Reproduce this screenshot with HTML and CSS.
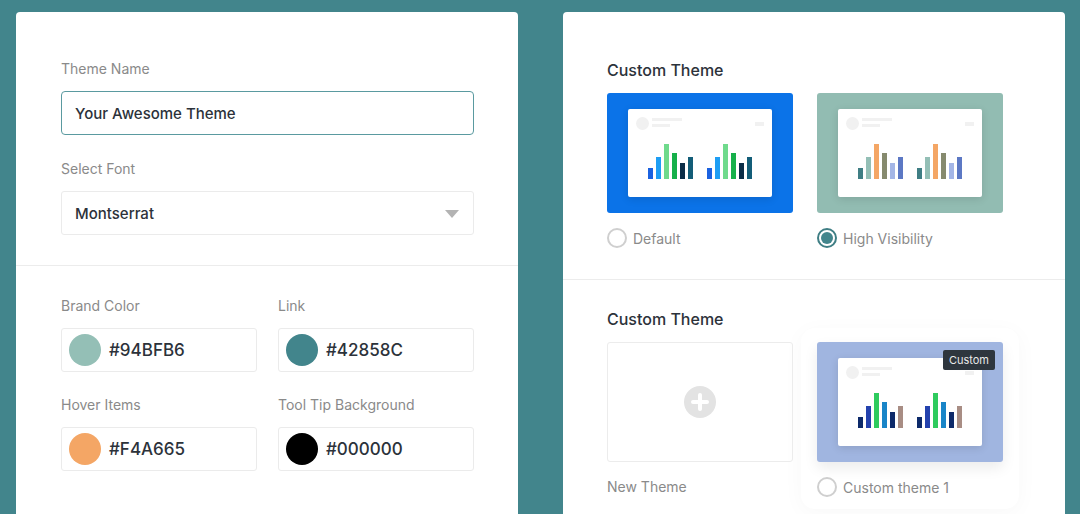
FILE: index.html
```html
<!DOCTYPE html>
<html lang="en">
<head>
<meta charset="utf-8">
<title>Theme Settings</title>
<link rel="stylesheet" href="styles.css">
</head>
<body>
<div class="page">
  <section class="card">
    <div class="section section-top">
      <label class="field-label">Theme Name</label>
      <div class="text-input">Your Awesome Theme</div>
      <label class="field-label spaced">Select Font</label>
      <div class="select">
        <span>Montserrat</span>
        <span class="caret"></span>
      </div>
    </div>
    <div class="section section-colors">
      <div class="color-grid">
        <div class="color-field">
          <label class="field-label">Brand Color</label>
          <div class="color-input"><span class="swatch swatch-brand"></span><span class="hex">#94BFB6</span></div>
        </div>
        <div class="color-field">
          <label class="field-label">Link</label>
          <div class="color-input"><span class="swatch swatch-link"></span><span class="hex">#42858C</span></div>
        </div>
        <div class="color-field">
          <label class="field-label">Hover Items</label>
          <div class="color-input"><span class="swatch swatch-hover"></span><span class="hex">#F4A665</span></div>
        </div>
        <div class="color-field">
          <label class="field-label">Tool Tip Background</label>
          <div class="color-input"><span class="swatch swatch-tip"></span><span class="hex">#000000</span></div>
        </div>
      </div>
    </div>
  </section>

  <section class="card">
    <div class="section section-themes">
      <h2 class="heading">Custom Theme</h2>
      <div class="theme-grid">
        <div class="theme-item">
          <div class="thumb thumb-default">
            <div class="mini">
              <div class="mini-head"><span class="mini-avatar"></span><span class="mini-lines"><span class="mini-line long"></span><span class="mini-line short"></span></span><span class="mini-tag"></span></div>
              <div class="mini-chart">
                <div class="bars"><i></i><i></i><i></i><i></i><i></i><i></i></div>
                <div class="bars"><i></i><i></i><i></i><i></i><i></i><i></i></div>
              </div>
            </div>
          </div>
          <div class="radio-row"><span class="radio"></span><span class="radio-text">Default</span></div>
        </div>
        <div class="theme-item">
          <div class="thumb thumb-high">
            <div class="mini">
              <div class="mini-head"><span class="mini-avatar"></span><span class="mini-lines"><span class="mini-line long"></span><span class="mini-line short"></span></span><span class="mini-tag"></span></div>
              <div class="mini-chart">
                <div class="bars"><i></i><i></i><i></i><i></i><i></i><i></i></div>
                <div class="bars"><i></i><i></i><i></i><i></i><i></i><i></i></div>
              </div>
            </div>
          </div>
          <div class="radio-row"><span class="radio checked"></span><span class="radio-text">High Visibility</span></div>
        </div>
      </div>
    </div>
    <div class="section section-custom">
      <h2 class="heading">Custom Theme</h2>
      <div class="theme-grid">
        <div class="theme-item">
          <div class="thumb thumb-new">
            <svg class="plus" width="32" height="32" viewBox="0 0 32 32" aria-hidden="true">
              <circle cx="16" cy="16" r="16" fill="#e3e3e3"/>
              <rect x="7" y="14" width="18" height="4" rx="2" fill="#fff"/>
              <rect x="14" y="7" width="4" height="18" rx="2" fill="#fff"/>
            </svg>
          </div>
          <div class="plain-label">New Theme</div>
        </div>
        <div class="theme-item hovered">
          <div class="thumb thumb-custom">
            <div class="mini">
              <div class="mini-head"><span class="mini-avatar"></span><span class="mini-lines"><span class="mini-line long"></span><span class="mini-line short"></span></span><span class="mini-tag"></span></div>
              <div class="mini-chart">
                <div class="bars"><i></i><i></i><i></i><i></i><i></i><i></i></div>
                <div class="bars"><i></i><i></i><i></i><i></i><i></i><i></i></div>
              </div>
            </div>
            <span class="tooltip">Custom</span>
          </div>
          <div class="radio-row"><span class="radio"></span><span class="radio-text">Custom theme 1</span></div>
        </div>
      </div>
    </div>
  </section>
</div>
</body>
</html>
```

FILE: styles.css
```css
* { box-sizing: border-box; }

html, body {
  margin: 0;
  padding: 0;
}

body {
  background: #42858c;
  font-family: Inter, "Open Sans", "DejaVu Sans", sans-serif;
  color: #2c323a;
  width: 1080px;
  height: 514px;
  overflow: hidden;
}

.page {
  display: grid;
  grid-template-columns: 502px 502px;
  column-gap: 45px;
  padding: 12px 0 0 16px;
  height: 514px;
}

.card {
  background: #fff;
  border-radius: 4px 4px 0 0;
  height: 520px;
  position: relative;
  z-index: 0;
}

.section {
  padding-left: 45px;
  padding-right: 44px;
}

.section-top {
  padding-top: 47px;
  padding-bottom: 30px;
  border-bottom: 1px solid #ececec;
}

.field-label {
  display: block;
  font-size: 14px;
  line-height: 20px;
  color: #8a8a8a;
  margin-bottom: 12px;
}

.field-label.spaced { margin-top: 24px; }

.text-input {
  height: 44px;
  border: 1px solid #5a9aa0;
  border-radius: 4px;
  padding: 0 13px;
  display: flex;
  align-items: center;
  font-size: 15px;
  font-weight: 500;
  color: #2c323a;
}

.select {
  height: 44px;
  border: 1px solid #ebebeb;
  border-radius: 3px;
  padding: 0 14px 0 13px;
  display: flex;
  align-items: center;
  justify-content: space-between;
  font-size: 15px;
  font-weight: 500;
  color: #2c323a;
}

.caret {
  width: 0;
  height: 0;
  border-left: 7px solid transparent;
  border-right: 7px solid transparent;
  border-top: 8px solid #b3b3b3;
  margin-top: 2px;
}

.section-colors {
  padding-top: 30px;
}

.color-grid {
  display: grid;
  grid-template-columns: 196px 196px;
  column-gap: 21px;
  row-gap: 23px;
}

.color-input {
  height: 44px;
  border: 1px solid #ebebeb;
  border-radius: 3px;
  padding: 0 7px;
  display: flex;
  align-items: center;
  gap: 8px;
}

.swatch {
  width: 32px;
  height: 32px;
  border-radius: 50%;
  flex: none;
}
.swatch-brand { background: #94bfb6; }
.swatch-link { background: #42858c; }
.swatch-hover { background: #f4a665; }
.swatch-tip { background: #000; }

.hex {
  font-size: 17px;
  font-weight: 500;
  color: #2c323a;
}

/* Right card */
.card + .card .section {
  padding-left: 44px;
}

.section-themes {
  padding-top: 47px;
  padding-bottom: 31px;
  border-bottom: 1px solid #ececec;
}

.section-custom {
  padding-top: 28px;
}

.heading {
  margin: 0 0 12px;
  font-size: 16px;
  line-height: 22px;
  font-weight: 500;
  color: #2c323a;
}

.theme-grid {
  display: grid;
  grid-template-columns: 186px 186px;
  column-gap: 24px;
}

.theme-item { position: relative; }

.theme-item.hovered::before {
  content: "";
  position: absolute;
  top: -14px;
  left: -16px;
  right: -16px;
  bottom: -12px;
  border-radius: 14px;
  background: #fff;
  box-shadow: 0 4px 22px rgba(0, 0, 0, 0.03);
  z-index: -1;
}

.thumb {
  height: 120px;
  border-radius: 3px;
  padding: 16px 21px;
  position: relative;
}

.thumb-default { background: #0b73e8; }
.thumb-high { background: #92bcb2; }
.thumb-custom {
  background: #a0b5e0;
  box-shadow: 0 6px 14px rgba(0, 0, 0, 0.08);
}
.thumb-new {
  border: 1px solid #ececec;
  display: flex;
  align-items: center;
  justify-content: center;
}

.mini {
  width: 144px;
  height: 88px;
  background: #fff;
  border-radius: 2px;
  box-shadow: 0 2px 8px rgba(0, 0, 0, 0.12);
  padding: 8px 8px 0;
}

.mini-head {
  display: flex;
  align-items: flex-start;
  height: 13px;
}

.mini-avatar {
  width: 13px;
  height: 13px;
  border-radius: 50%;
  background: #f1f1f1;
  flex: none;
}

.mini-lines {
  display: flex;
  flex-direction: column;
  gap: 3px;
  margin-left: 3px;
  margin-top: 1px;
}

.mini-line {
  display: block;
  height: 3px;
  background: #f1f1f1;
}
.mini-line.long { width: 30px; }
.mini-line.short { width: 18px; }

.mini-tag {
  margin-left: auto;
  margin-top: 5px;
  width: 9px;
  height: 4px;
  background: #f1f1f1;
}

.mini-chart {
  display: flex;
  justify-content: center;
  gap: 14px;
  margin-top: 14px;
  height: 35px;
}

.bars {
  display: flex;
  align-items: flex-end;
  gap: 3px;
}

.bars i {
  display: block;
  width: 5px;
}
.bars i:nth-child(1) { height: 11px; }
.bars i:nth-child(2) { height: 22px; }
.bars i:nth-child(3) { height: 35px; }
.bars i:nth-child(4) { height: 26px; }
.bars i:nth-child(5) { height: 16px; }
.bars i:nth-child(6) { height: 22px; }

.thumb-default .bars i:nth-child(1) { background: #1b62e0; }
.thumb-default .bars i:nth-child(2) { background: #1e9ef4; }
.thumb-default .bars i:nth-child(3) { background: #6fda8c; }
.thumb-default .bars i:nth-child(4) { background: #16b04a; }
.thumb-default .bars i:nth-child(5) { background: #0b2d47; }
.thumb-default .bars i:nth-child(6) { background: #135d78; }

.thumb-high .bars i:nth-child(1) { background: #3f7e84; }
.thumb-high .bars i:nth-child(2) { background: #94bfb6; }
.thumb-high .bars i:nth-child(3) { background: #f4a665; }
.thumb-high .bars i:nth-child(4) { background: #868a6e; }
.thumb-high .bars i:nth-child(5) { background: #a4b6e6; }
.thumb-high .bars i:nth-child(6) { background: #5c78c4; }

.thumb-custom .bars i:nth-child(1) { background: #0d2a6a; }
.thumb-custom .bars i:nth-child(2) { background: #2442ae; }
.thumb-custom .bars i:nth-child(3) { background: #2ecb5e; }
.thumb-custom .bars i:nth-child(4) { background: #1985c8; }
.thumb-custom .bars i:nth-child(5) { background: #0d2a6a; }
.thumb-custom .bars i:nth-child(6) { background: #a88d84; }

.tooltip {
  position: absolute;
  top: 8px;
  right: 8px;
  background: #2e363e;
  color: #e9e9e9;
  font-size: 11px;
  line-height: 14px;
  padding: 3px 6px 3px;
  border-radius: 2px;
}

.radio-row {
  display: flex;
  align-items: center;
  gap: 6px;
  margin-top: 15px;
  height: 20px;
}

.radio {
  width: 20px;
  height: 20px;
  border-radius: 50%;
  border: 2px solid #cfcfcf;
  flex: none;
  display: flex;
  align-items: center;
  justify-content: center;
}

.radio.checked {
  border-color: #3f7e84;
}
.radio.checked::after {
  content: "";
  width: 12px;
  height: 12px;
  border-radius: 50%;
  background: #42858c;
}

.radio-text, .plain-label {
  font-size: 14px;
  color: #8a8a8a;
}

.plain-label {
  margin-top: 15px;
  height: 20px;
  line-height: 20px;
}
```
